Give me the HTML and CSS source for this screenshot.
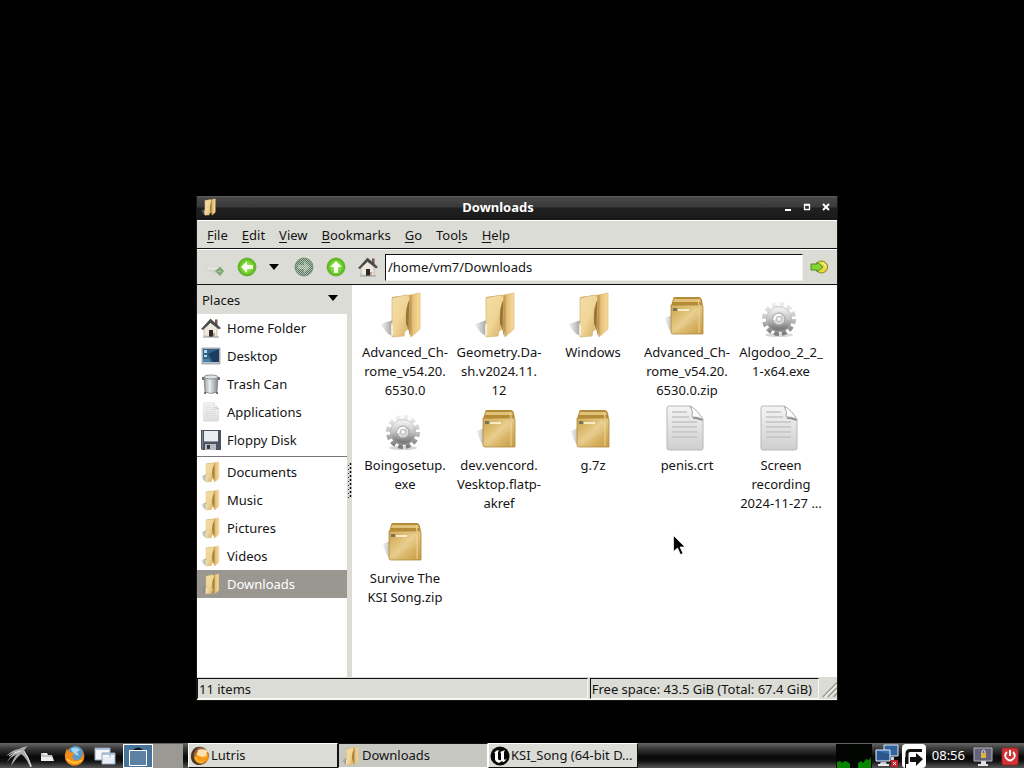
FILE: index.html
```html
<!DOCTYPE html>
<html lang="en">
<head>
<meta charset="utf-8">
<title>Downloads</title>
<link rel="stylesheet" href="styles.css">
</head>
<body>
<svg class="sprites" aria-hidden="true">
  <defs>
    <linearGradient id="tan" x1="0" y1="0" x2="1" y2="1"><stop offset="0" stop-color="#f3dda6"/><stop offset=".5" stop-color="#f0d597"/><stop offset="1" stop-color="#d2aa5c"/></linearGradient>
    <linearGradient id="tanside" x1="0" x2="1"><stop offset="0" stop-color="#a17c39"/><stop offset=".35" stop-color="#e6c077"/><stop offset="1" stop-color="#f7dc9e"/></linearGradient>
    <linearGradient id="shade" x1="0" x2="1"><stop offset="0" stop-color="#999" stop-opacity=".15"/><stop offset="1" stop-color="#666" stop-opacity=".85"/></linearGradient>
    <linearGradient id="boxfront" x1="0" y1="0" x2="1" y2="1"><stop offset="0" stop-color="#c9a048"/><stop offset=".45" stop-color="#e6ca85"/><stop offset="1" stop-color="#c7993f"/></linearGradient>
    <linearGradient id="gearfill" x1="0" y1="0" x2="0" y2="1"><stop offset="0" stop-color="#eeeeee"/><stop offset=".5" stop-color="#c2c2c2"/><stop offset="1" stop-color="#7c7c7c"/></linearGradient>
    <linearGradient id="paper" x1="0" y1="0" x2="0" y2="1"><stop offset="0" stop-color="#f4f4f4"/><stop offset="1" stop-color="#cfcfcf"/></linearGradient>
    <radialGradient id="green" cx=".5" cy=".5" r=".55"><stop offset="0" stop-color="#c3f383"/><stop offset=".6" stop-color="#74d02c"/><stop offset="1" stop-color="#4ba51d"/></radialGradient>
    <linearGradient id="can" x1="0" x2="1"><stop offset="0" stop-color="#858b8e"/><stop offset=".35" stop-color="#f4f6f7"/><stop offset="1" stop-color="#7e8588"/></linearGradient>
    <pattern id="checks" width="2" height="2" patternUnits="userSpaceOnUse"><path d="M0 0h1v1H0zM1 1h1v1H1z" fill="#56765e"/></pattern>
  </defs>
  <symbol id="folder" viewBox="0 0 48 48">
    <path d="M14 29 2 33q4 9 11 12l4-1z" fill="url(#shade)"/>
    <path d="m13 6 18-2v33l-17 7z" fill="#c59a4a"/>
    <path d="m13 7 14-3q4 0 4 5v28l-5 3-1 5-12 1z" fill="url(#tan)" stroke="#d3b677" stroke-width=".7"/>
    <path d="M31 8q-5 7-4 25l2 4 2 8z" fill="#967638"/>
    <path d="m31 4 10-2v36l-9 8-2-10z" fill="url(#tanside)" stroke="#dcb86e" stroke-width=".7"/>
    <path d="M12 32v13l2-1V34z" fill="#fff" opacity=".7"/>
  </symbol>
  <symbol id="archive" viewBox="0 0 48 48">
    <path d="M11 24 4 27q3 13 9 16h5V22z" fill="url(#shade)"/>
    <path d="M12 8q0-2 2-2h24q2 0 3 3l1 6H10z" fill="#b68b38"/>
    <path d="M13 8h26l1 3H12z" fill="#dfc17a"/>
    <path d="m10 14h31q1 0 1 2v27H12q-2 0-2-2z" fill="url(#boxfront)" stroke="#b18a3c" stroke-width=".8"/>
    <path d="m37 8 1 6v28" fill="none" stroke="#ecd08c" stroke-width="1.2"/>
    <path d="M11 16h29" stroke="#dcc17a"/>
    <path d="M17 19h11" stroke="#fff8df" stroke-width="1.6"/><path d="M12 17h4v3h-4z" fill="#77725a"/>
    <path d="M13 38 34 17l5 1v8L16 41z" fill="#fff" opacity=".1"/>
  </symbol>
  <symbol id="gear" viewBox="0 0 48 48">
    <ellipse cx="24" cy="44" rx="14" ry="2" fill="#bbb" opacity=".6"/>
    <circle cx="24" cy="28" r="14.500" fill="none" stroke="url(#gearfill)" stroke-width="5" stroke-dasharray="4.600 2.992"/>
    <circle cx="24" cy="28" r="9.500" fill="none" stroke="url(#gearfill)" stroke-width="7"/>
    <circle cx="24" cy="28" r="12.500" fill="none" stroke="#b5b5b5" stroke-width=".6"/>
    <circle cx="24" cy="28" r="6" fill="#d9d9d9" stroke="#a0a0a0"/>
    <path d="M19 29q1-6 7-5" fill="none" stroke="#fff" stroke-width="2"/>
    <circle cx="24" cy="28" r="2.500" fill="#f7f7f7" stroke="#a5a5a5" stroke-width=".8"/>
  </symbol>
  <symbol id="document" viewBox="0 0 48 48">
    <path d="M8 2h21q4 3 13 13v29q0 2-2 2H8q-2 0-2-2V4q0-2 2-2z" fill="url(#paper)" stroke="#b8b8b8"/>
    <path d="M11 8h15M11 13h17M11 18h25M11 23h25M11 28h25M11 33h25" stroke="#c4c4c4" stroke-width="1.300"/>
    <path d="M29 2q4 6 2 11 6-1 11 3-5-10-13-14z" fill="#fff" stroke="#a8a8a8"/>
    <path d="M32 14q5 0 9 2" fill="none" stroke="#888" stroke-width="1.500"/>
  </symbol>
  <symbol id="home" viewBox="0 0 20 20">
    <path d="M3 10v8l13 1V9l-6-6z" fill="#eee9df" stroke="#aaa193" stroke-width=".6"/>
    <path d="M14 1.500h2.500V7H14z" fill="#79544c"/>
    <path d="m.5 11 9-10 10 9-1.500 1-8.500-6.500L2 11.500z" fill="#4a4d4d" stroke="#353838" stroke-width=".6"/>
    <path d="M8 12h4v7H8z" fill="#302725"/><path d="M12 15h2v3h-2z" fill="#b99f87"/>
    <path d="M2 19h16" stroke="#999"/>
  </symbol>
  <symbol id="desktop" viewBox="0 0 20 20">
    <path d="M1 2h18v16H1z" fill="#b7c1c7" stroke="#777f83" stroke-width=".6"/><path d="M2 3h16v13H2z" fill="#34648c"/>
    <path d="m7 8 11-5v13H12z" fill="#1c3e5e"/><path d="M3 4h3v3H3zM3 9h3v2H3z" fill="#b9dbe9"/><path d="M2 13h7v3H2z" fill="#4685a4"/>
  </symbol>
  <symbol id="trash" viewBox="0 0 20 20">
    <path d="m3 3 1 15q6 3 12 0l1-15z" fill="url(#can)" stroke="#707679" stroke-width=".7"/><ellipse cx="10" cy="3" rx="7" ry="2" fill="#dce1e3" stroke="#8b9194"/><path d="M7 6v12M12 6v12" stroke="#c0c5c7"/><path d="M2 3v3M18 3v3M3 19h2M15 19h2" stroke="#454a4c" stroke-width="1.500"/>
  </symbol>
  <symbol id="floppy" viewBox="0 0 20 20">
    <path d="M0 0h20v20H1l-1-1z" fill="#4c5360"/><path d="M3 1h14v10H3z" fill="#e9edf2"/><path d="M3 11h14v1H3z" fill="#8d98a8"/><path d="M4 14h11v6H4z" fill="#b7bcbf"/><path d="M6 15h3v4H6z" fill="#333945"/><path d="M1 1h1v18H1z" fill="#7f8794"/>
  </symbol>
  <symbol id="greenarrow" viewBox="0 0 20 20">
    <circle cx="10" cy="10" r="9" fill="url(#green)" stroke="#5bb02c" stroke-width=".8"/><path d="m4 10 6-6v4h6v4h-6v4z" fill="#f7fff0"/>
  </symbol>
</svg>

<main class="desktop">
  <section class="window" aria-label="Downloads">
    <header class="titlebar">
      <svg class="title-icon"><use href="#folder"/></svg>
      <h1 class="title">Downloads</h1>
      <div class="window-buttons">
        <button class="winbtn" aria-label="Minimize"><svg viewBox="0 0 10 10"><path d="M2 8h6" stroke="#fff" stroke-width="2"/></svg></button>
        <button class="winbtn" aria-label="Maximize"><svg viewBox="0 0 10 10"><path d="M2.500 3h5v4.500h-5z" fill="none" stroke="#fff" stroke-width="1.300"/><path d="M2 2.500h6" stroke="#fff" stroke-width="1.500"/></svg></button>
        <button class="winbtn" aria-label="Close"><svg viewBox="0 0 10 10"><path d="m2 2 6 6M8 2 2 8" stroke="#fff" stroke-width="1.900"/></svg></button>
      </div>
    </header>
    <nav class="menubar" aria-label="Menu">
      <button class="menu"><u>F</u>ile</button>
      <button class="menu"><u>E</u>dit</button>
      <button class="menu"><u>V</u>iew</button>
      <button class="menu"><u>B</u>ookmarks</button>
      <button class="menu"><u>G</u>o</button>
      <button class="menu">Too<u>l</u>s</button>
      <button class="menu"><u>H</u>elp</button>
    </nav>
    <div class="toolbar">
      <button class="tool" aria-label="New tab"><svg viewBox="0 0 20 20"><path d="m1 13 4-3 12-1v5l-7 2z" fill="#ced0ca"/><path d="M3 10h11v3H3z" fill="#e2e3df"/><path d="m15 10 4 4-4 5-5-5z" fill="#75a36f"/><path d="M15 12v5M12 14.500h5" stroke="#a0c298"/></svg></button>
      <button class="tool back" aria-label="Back"><svg><use href="#greenarrow"/></svg></button>
      <button class="tool history" aria-label="History"><svg viewBox="0 0 10 10"><path d="M0 2h10L5 8z"/></svg></button>
      <button class="tool forward" aria-label="Forward" disabled><svg viewBox="0 0 20 20"><circle cx="10" cy="10" r="9" fill="#b5c3b2" stroke="#7d9680"/><circle cx="10" cy="10" r="9" fill="url(#checks)"/><path d="m16 10-6-6v4H4v4h6v4z" fill="#dfe6db" opacity=".45"/></svg></button>
      <button class="tool up" aria-label="Up"><svg viewBox="0 0 20 20"><use href="#greenarrow" width="20" height="20" transform="rotate(90 10 10)"/></svg></button>
      <button class="tool home" aria-label="Home"><svg><use href="#home"/></svg></button>
      <input class="path" type="text" aria-label="Location" value="/home/vm7/Downloads">
      <button class="tool go" aria-label="Go"><svg viewBox="0 0 20 20"><circle cx="12.500" cy="10" r="6" fill="#e9d840" stroke="#8a8517"/><path d="M13 6q4 1 4 5" fill="none" stroke="#fffac1"/><path d="M2 7h6V5l6 5-6 5v-2H2z" fill="#86d532" stroke="#4d8a22"/></svg></button>
    </div>
    <div class="content">
      <aside class="sidebar">
        <button class="places">Places <svg viewBox="0 0 10 10"><path d="M0 2h10L5 8z"/></svg></button>
        <div class="place-list">
          <a class="place" href="#home-folder"><svg><use href="#home"/></svg>Home Folder</a>
          <a class="place" href="#desktop-folder"><svg><use href="#desktop"/></svg>Desktop</a>
          <a class="place" href="#trash-can"><svg><use href="#trash"/></svg>Trash Can</a>
          <a class="place faded" href="#applications"><svg><use href="#document"/></svg>Applications</a>
          <a class="place" href="#floppy-disk"><svg><use href="#floppy"/></svg>Floppy Disk</a>
          <hr class="rule">
          <a class="place dir" href="#documents"><svg><use href="#folder"/></svg>Documents</a>
          <a class="place dir" href="#music"><svg><use href="#folder"/></svg>Music</a>
          <a class="place dir" href="#pictures"><svg><use href="#folder"/></svg>Pictures</a>
          <a class="place dir" href="#videos"><svg><use href="#folder"/></svg>Videos</a>
          <a class="place dir selected" href="#downloads"><svg><use href="#folder"/></svg>Downloads</a>
        </div>
      </aside>
      <div class="splitter"><svg viewBox="0 0 4 36"><path d="M.5 2v34" stroke="#333" stroke-dasharray="1 3"/><path d="M2.500 0v36" stroke="#111" stroke-width="1.500" stroke-dasharray="2 2"/></svg></div>
      <ul class="files">
        <li class="file"><svg><use href="#folder"/></svg><span>Advanced_Ch-<br>rome_v54.20.<br>6530.0</span></li>
        <li class="file"><svg><use href="#folder"/></svg><span>Geometry.Da-<br>sh.v2024.11.<br>12</span></li>
        <li class="file"><svg><use href="#folder"/></svg><span>Windows</span></li>
        <li class="file"><svg><use href="#archive"/></svg><span>Advanced_Ch-<br>rome_v54.20.<br>6530.0.zip</span></li>
        <li class="file"><svg><use href="#gear"/></svg><span>Algodoo_2_2_<br>1-x64.exe</span></li>
        <li class="file"><svg><use href="#gear"/></svg><span>Boingosetup.<br>exe</span></li>
        <li class="file"><svg><use href="#archive"/></svg><span>dev.vencord.<br>Vesktop.flatp-<br>akref</span></li>
        <li class="file"><svg><use href="#archive"/></svg><span>g.7z</span></li>
        <li class="file"><svg><use href="#document"/></svg><span>penis.crt</span></li>
        <li class="file"><svg><use href="#document"/></svg><span>Screen<br>recording<br>2024-11-27 ...</span></li>
        <li class="file"><svg><use href="#archive"/></svg><span>Survive The<br>KSI Song.zip</span></li>
      </ul>
    </div>
    <footer class="statusbar">
      <span class="status items">11 items</span>
      <span class="status space">Free space: 43.5 GiB (Total: 67.4 GiB)</span>
      <svg class="grip" viewBox="0 0 18 20"><path d="M2 20 18 4M8 20 18 10M14 20l4-4" stroke="#8d8e89" stroke-width="1.500"/><path d="M4 20 18 6M10 20l8-8" stroke="#fff"/></svg>
    </footer>
  </section>
  <svg class="cursor" viewBox="0 0 12 20"><path d="M.5.500v16l4-3.500 3 6.500 2.500-1-3-6.500h5z" fill="#000" stroke="#fff" stroke-width=".7"/></svg>
</main>

<footer class="taskbar">
  <div class="launchers">
    <button class="launch menu-launch" aria-label="Applications menu"><svg viewBox="0 0 30 24"><path d="M24 2q-3 2-4 5 5 6 8 16l-2 0Q22 13 17 10q-5 4-10 12 2-8 6-12-6 3-10 8 4-7 9-10-5 1-10 4 6-6 13-7Q18 3 24 2z" fill="#a9acad"/><path d="M20 7q4 5 7 15M17 7Q10 8 5 12" fill="none" stroke="#e4e4e4"/></svg></button>
    <button class="launch files-launch" aria-label="File manager"><svg viewBox="0 0 20 20"><path d="M4 7h6l1 2h4l2 6H4z" fill="#eee"/><path d="M5 7v3h10" fill="none" stroke="#999"/></svg></button>
    <button class="launch" aria-label="Web browser"><svg viewBox="0 0 22 22"><circle cx="11" cy="11" r="9.500" fill="#e96717"/><circle cx="11.500" cy="8.500" r="7.500" fill="#5a9bc9"/><path d="M7 4q5-3 9 1l-3 2 2 4-5-2z" fill="#a7d7ee"/><path d="M3 3q0 3 3 4 2 1 5 1-1 2-3 3 1 5 6 4 4-1 5-7 2 5-1 9-5 5-11 3-7-3-6-11z" fill="#f58b19"/><path d="M3 14q7 7 15 1" fill="none" stroke="#ffd13b" stroke-width="1.500"/></svg></button>
    <button class="launch windows-launch" aria-label="Minimize all windows"><svg viewBox="0 0 22 22"><path d="M1 3h15v12H1zM8 8h13v11H8z" fill="#f5f8fb" stroke="#91a3b6"/><path d="M1.500 4h14M8.500 9h12" stroke="#9db8d2" stroke-width="1.500"/><path d="M9 12h11v6H9z" fill="#e6edf6"/></svg></button>
    <div class="pager">
      <button class="desk active" aria-label="Desktop 1"><svg viewBox="0 0 28 22"><path d="M5.500 5.500h17v15h-17z" fill="#5c81a2" stroke="#fff"/><path d="M9 5q5-5 10 0z" fill="#111"/></svg></button>
      <button class="desk" aria-label="Desktop 2"></button>
    </div>
  </div>
  <div class="tasks">
    <button class="task"><svg viewBox="0 0 20 20"><circle cx="10" cy="10" r="9" fill="#9b6a3c"/><path d="M18 3Q8-2 4 7q-2 10 8 12Q1 20 1 10 2-1 13 1z" fill="#4c3421"/><circle cx="12" cy="10.500" r="6.500" fill="#f79a15"/><path d="M8 4q5-2 10 1l-2 3 1 2-5 1-5-2z" fill="#ffe0b0"/><path d="M5 11q2 6 8 5" fill="none" stroke="#ffb52c" stroke-width="2"/></svg>Lutris</button>
    <button class="task pressed"><svg><use href="#folder"/></svg>Downloads</button>
    <button class="task"><svg viewBox="0 0 20 20"><circle cx="10" cy="10" r="9.500" fill="#080808"/><path d="M4 7q2-3 5-3L8 6v7q1 2 3 1V7l-1-1 5-2-1 2v7l1 1 2-2q-2 4-4 4l-1-1-3 2q-3-1-4-3V7z" fill="#fff"/></svg>KSI_Song (64-bit D...</button>
  </div>
  <div class="tray">
    <svg class="graph" viewBox="0 0 36 24" role="img" aria-label="CPU usage"><path d="M0 0h36v24H0z" fill="#020502"/><path d="M1 24v-6l3-1 2 2 3-2 3 1 2 2v4zM22 24v-5l3-2 2 2 3-4 3 1 2-3v11z" fill="#078400"/></svg>
    <svg class="network" viewBox="0 0 24 24" role="img" aria-label="Network disconnected"><path d="M9 1h14v11H9z" fill="#31649e" stroke="#dfe7ef"/><path d="M1 6h14v11H1z" fill="#356eb1" stroke="#e6edf4"/><path d="m2 7 12 3v6H2z" fill="#2a568d"/><path d="M6 18h5l1 3H4zM16 13h3v4h-3z" fill="#cbd1d6"/><path d="M3 21h11" stroke="#e8ecef" stroke-width="2"/><path d="M16 16h7v7h-7z" fill="#c71e2c"/><path d="m18 18 3 3M21 18l-3 3" stroke="#fff"/></svg>
    <svg class="share" viewBox="0 0 24 24" role="img" aria-label="Guest tools"><rect width="24" height="24" rx="4" fill="#fff"/><path d="M20 6.500H8q-3 0-3 3V20" fill="none" stroke="#111" stroke-width="3"/><path d="M3.500 24V13" stroke="#111" stroke-width="1"/><path d="M8 13h6V9l7 6-7 7v-4H8z" fill="#111"/></svg>
    <time class="clock">08:56</time>
    <button class="launch lock" aria-label="Lock screen"><svg viewBox="0 0 20 22"><path d="M1 3h18v13H1z" fill="#65627c" stroke="#b5b5b7"/><path d="M8 8h5v5H8z" fill="#d9b83e"/><path d="M9 8V6q1.500-2 3 0v2" fill="none" stroke="#ddd"/><path d="M8 16h5v3H8zM5 19h10v2H5z" fill="#e1e3e4"/></svg></button>
    <button class="launch power" aria-label="Shut down"><svg viewBox="0 0 20 22"><rect x="2" y="3" width="16" height="17" rx="2" fill="#d23538" stroke="#a02326"/><path d="M7 7q-3 3-1 6 4 5 8 0 2-3-1-6" fill="none" stroke="#fff" stroke-width="1.800"/><path d="M10 5v6" stroke="#fff" stroke-width="2"/></svg></button>
  </div>
</footer>
</body>
</html>
```

FILE: styles.css
```css
* { box-sizing: border-box; }
body {
  margin: 0;
  height: 100vh;
  display: flex;
  flex-direction: column;
  overflow: hidden;
  background: #000;
  color: #141414;
  font: 13px/19px "Noto Sans", sans-serif;
}
button, input { font: inherit; color: inherit; margin: 0; }
button { background: none; border: 0; padding: 0; }
svg { display: block; flex: none; }
.sprites { position: absolute; width: 0; height: 0; }

.desktop { flex: 1; position: relative; min-height: 0; }
.window {
  position: absolute;
  left: 196px;
  top: 196px;
  right: 186px;
  bottom: 42px;
  display: flex;
  flex-direction: column;
  border: 1px solid #171717;
  border-top: 0;
  background: #dcdcd6;
}
.titlebar {
  height: 24px;
  display: grid;
  grid-template-columns: 54px 1fr 54px;
  align-items: center;
  padding-bottom: 2px;
  color: #fff;
  background: linear-gradient(#606060 0, #474747 2px, #393939 11px, #202020 12px, #191919);
}
.title-icon { width: 18px; height: 18px; margin-left: 3px; }
.title { margin: 0; padding-right: 38px; font-size: 13px; line-height: 22px; text-align: center; }
.window-buttons { display: flex; gap: 9px; }
.winbtn svg { width: 10px; height: 10px; }

.menubar {
  height: 29px;
  display: flex;
  align-items: center;
  gap: 14px;
  padding: 2px 0 0 10px;
  border-top: 1px solid #fff;
  border-bottom: 1px solid #111;
}
.menu u { text-underline-offset: 2px; }
.toolbar {
  height: 36px;
  display: flex;
  align-items: center;
  padding: 0 8px;
  border-top: 1px solid #fff;
  border-bottom: 1px solid #111;
}
.tool svg { width: 20px; height: 20px; }
.back { margin-left: 12px; }
.history { margin-left: 12px; }
.history svg { width: 10px; height: 10px; }
.forward { margin-left: 15px; }
.up { margin-left: 12px; }
.home { margin: 0 7px 0 12px; }
.path {
  flex: 1;
  min-width: 0;
  height: 27px;
  padding: 0 2px;
  border: 1px solid;
  border-color: #111 #efefeb #efefeb #111;
  border-radius: 0;
  background: #fff;
  outline: 0;
}
.go { margin-left: 6px; }

.content { flex: 1; min-height: 0; display: flex; background: #fff; }
.sidebar { width: 150px; flex: none; display: flex; flex-direction: column; }
.places {
  height: 29px;
  display: flex;
  align-items: center;
  justify-content: space-between;
  padding: 1px 9px 0 5px;
  background: #dcdcd6;
}
.places svg { width: 10px; height: 10px; margin-bottom: 4px; }
.place {
  display: flex;
  align-items: center;
  gap: 6px;
  height: 28px;
  padding-left: 4px;
  color: inherit;
  text-decoration: none;
}
.place svg { width: 20px; height: 22px; }
.dir { padding-left: 3px; gap: 5px; }
.dir svg { width: 22px; height: 24px; }
.faded svg { opacity: .7; }
.place.selected { background: #99978f; color: #fff; }
.rule { height: 1px; margin: 2px 0 1px; border: 0; background: #777; }
.splitter { width: 5px; flex: none; display: flex; align-items: center; background: #dcdcd6; }
.splitter svg { width: 4px; height: 36px; margin-left: 1px; }
.files {
  flex: 1;
  display: grid;
  grid-template-columns: repeat(auto-fill, 94px);
  grid-auto-rows: 113px;
  align-content: start;
  margin: 0;
  padding: 6px 6px 0;
  list-style: none;
}
.file { display: flex; flex-direction: column; align-items: center; gap: 4px; text-align: center; white-space: nowrap; }
.file svg { width: 48px; height: 48px; margin-right: 4px; }

.statusbar {
  height: 23px;
  display: flex;
  padding-top: 1px;
  gap: 2px;
  border-bottom: 1px solid #f4f4f0;
}
.status {
  border: 1px solid;
  border-color: #111 #f7f7f4 #f7f7f4 #111;
  white-space: nowrap;
  padding: 1px 0 0 1px;
}
.items { flex: 1; }
.space { padding-right: 6px; }
.grip { width: 16px; height: 20px; }
.cursor { position: absolute; left: 673px; top: 535px; width: 12px; height: 20px; }

.taskbar {
  height: 25px;
  display: flex;
  background: linear-gradient(#686868, #3d3d3d 5px, #080808 14px, #111 18px, #555);
}
.launchers { width: 188px; flex: none; display: flex; align-items: center; }
.launch svg { width: 22px; height: 22px; }
.menu-launch { margin-left: 4px; }
.menu-launch svg { width: 30px; height: 24px; }
.files-launch { margin: 0 7px 0 3px; }
.files-launch svg { width: 20px; height: 20px; }
.windows-launch { margin: 0 7px 0 8px; }
.pager { display: flex; }
.desk { width: 30px; height: 24px; background: #9b9993; }
.desk.active { background: #48749a; border: 1px solid #fff; }
.desk svg { width: 28px; height: 22px; }
.tasks { flex: 1; min-width: 0; display: flex; }
.task {
  width: 150px;
  height: 25px;
  display: flex;
  align-items: center;
  gap: 1px;
  padding-left: 1px;
  border: 1px solid;
  border-color: #fff #111 #111 #fff;
  background: #dcdcd6;
  white-space: nowrap;
}
.task svg { width: 20px; height: 20px; }
.pressed { background: #c8c8c2; border-color: #111 #fff #fff #111; padding-left: 2px; }
.tray { display: flex; align-items: center; }
.graph { width: 36px; height: 24px; }
.network { width: 24px; height: 24px; margin-left: 3px; }
.share { width: 24px; height: 24px; margin-left: 3px; }
.clock { margin: 0 8px 0 6px; color: #fff; }
.lock svg, .power svg { width: 20px; }
.power { margin: 0 4px 0 7px; }
```
